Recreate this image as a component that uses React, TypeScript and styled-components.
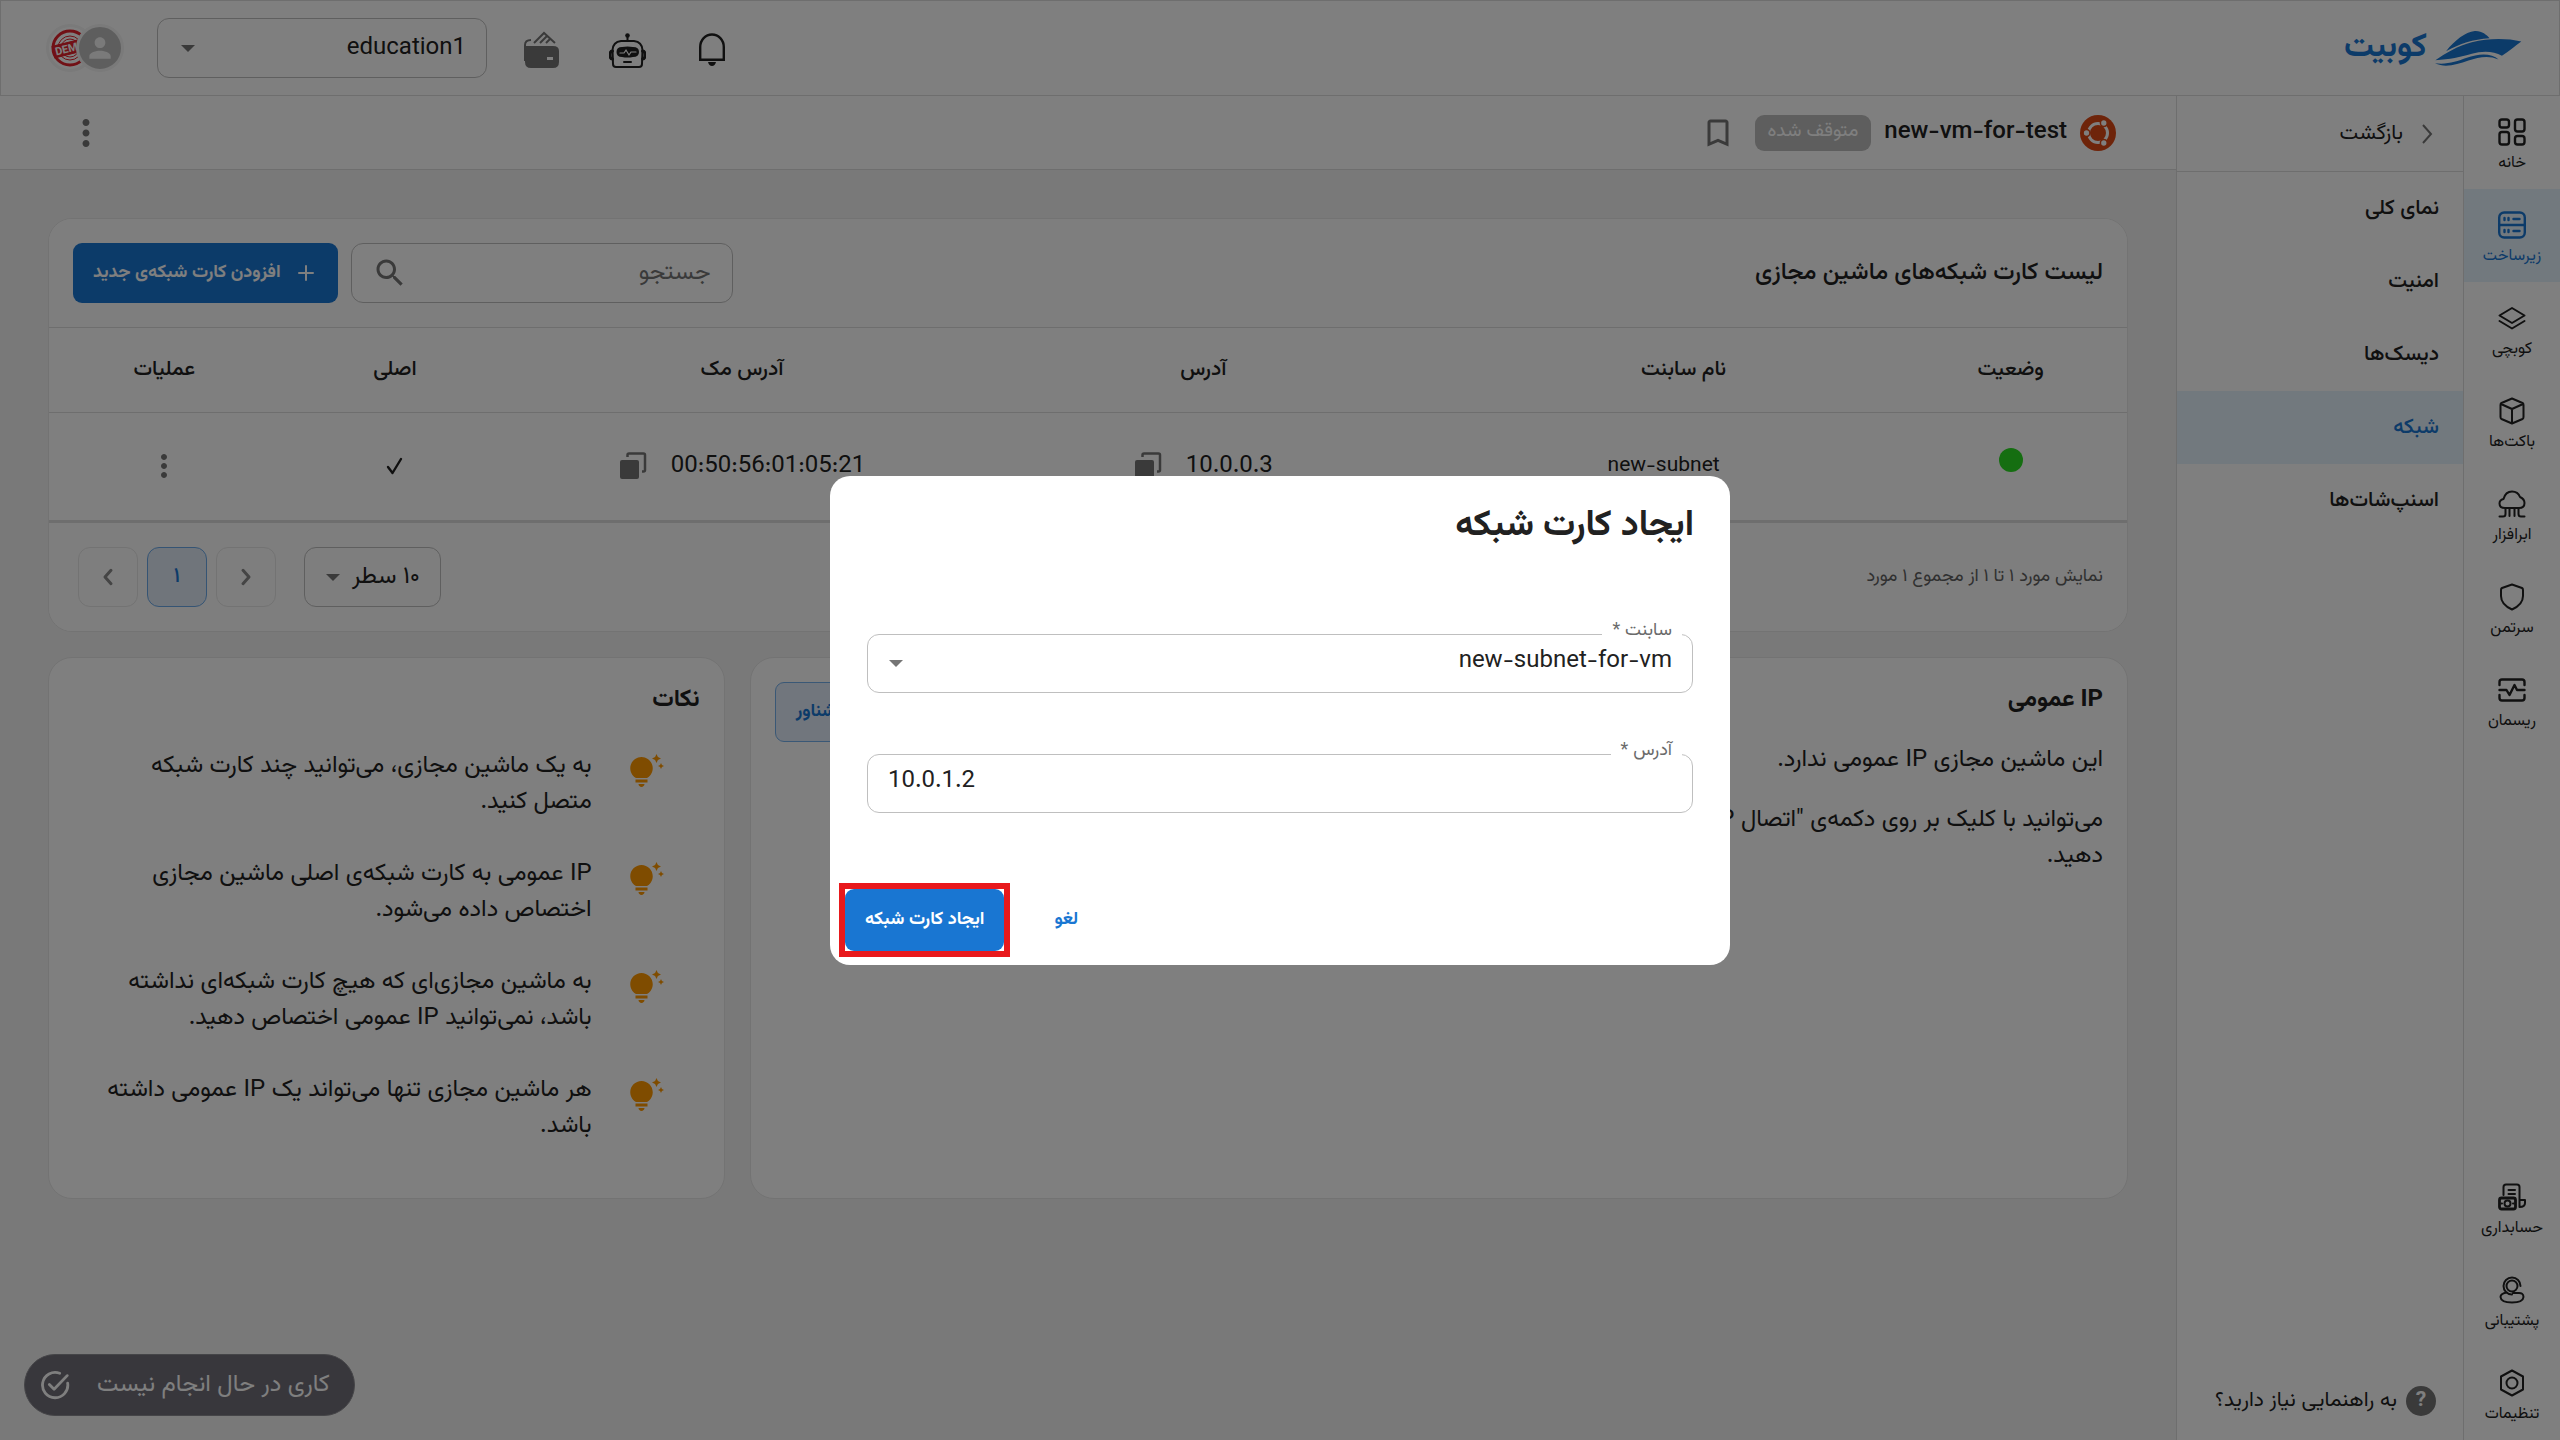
import React from 'react';
import styled, { createGlobalStyle } from 'styled-components';

const c = {
  blue: '#1976d2',
  text: '#212121',
  muted: '#757575',
  line: '#dcdcdc',
  soft: '#e6e6e6',
  active: '#e4f2fd',
  page: '#f3f3f3',
};

const GlobalStyle = createGlobalStyle`
  *, *::before, *::after { box-sizing: border-box; }
  body {
    margin: 0;
    background: ${c.page};
    color: ${c.text};
    font-family: Vazirmatn, Roboto, 'DejaVu Sans', sans-serif;
    font-size: 24px;
    line-height: 36px;
  }
  button, input, select { font: inherit; color: inherit; margin: 0; }
  h1, h2, h3, p, ul { margin: 0; padding: 0; }
  ul { list-style: none; }
  svg { display: block; flex: none; }
`;

/* ---------- shell ---------- */

const Page = styled.div`
  min-height: 100vh;
  display: flex;
  flex-direction: column;
`;
const Header = styled.header`
  height: 96px;
  flex: none;
  display: flex;
  align-items: center;
  justify-content: space-between;
  padding: 0 37px 0 45px;
  background: #fff;
  border: 1px solid ${c.line};
`;
const Brand = styled.a`
  display: flex;
  align-items: center;
  gap: 8px;
  color: ${c.blue};
  font-size: 33px;
  line-height: 48px;
  font-weight: 700;
  text-decoration: none;
`;
const HeaderTools = styled.div`
  display: flex;
  align-items: center;
  gap: 25px;
`;
const IconButton = styled.button<{ $size?: number; $color?: string }>`
  width: ${p => p.$size ?? 60}px;
  height: ${p => p.$size ?? 60}px;
  padding: 0;
  border: 0;
  background: none;
  display: flex;
  align-items: center;
  justify-content: center;
  color: ${p => p.$color ?? c.text};
`;
const Avatars = styled.div`
  display: flex;
  margin-inline-start: 8px;
`;
const Avatar = styled.span<{ $front?: boolean }>`
  width: 48px;
  height: 48px;
  border-radius: 50%;
  border: 3px solid #f4f4f4;
  overflow: hidden;
  background: ${p => (p.$front ? '#bdbdbd' : '#fff')};
  display: flex;
  align-items: center;
  justify-content: center;
  position: relative;
  z-index: ${p => (p.$front ? 1 : 0)};
  & + & { margin-inline-start: -18px; }
`;
const Body = styled.div`
  flex: 1;
  display: flex;
`;
const Rail = styled.nav`
  width: 97px;
  flex: none;
  display: flex;
  flex-direction: column;
  justify-content: space-between;
  background: #fff;
  border-left: 1px solid ${c.line};
`;
const RailItem = styled.a<{ $active?: boolean }>`
  height: 93px;
  display: flex;
  flex-direction: column;
  align-items: center;
  padding-top: 22px;
  gap: 6px;
  font-size: 16px;
  line-height: 24px;
  white-space: nowrap;
  text-decoration: none;
  color: ${p => (p.$active ? c.blue : c.text)};
  background: ${p => (p.$active ? c.active : 'transparent')};
`;
const Side = styled.aside`
  width: 287px;
  flex: none;
  display: flex;
  flex-direction: column;
  background: #fff;
  border-left: 1px solid ${c.line};
  font-size: 21px;
`;
const Back = styled.a`
  height: 76px;
  display: flex;
  align-items: center;
  gap: 12px;
  padding: 0 24px;
  border-bottom: 1px solid ${c.line};
  color: ${c.text};
  text-decoration: none;
`;
const SideLink = styled.a<{ $active?: boolean }>`
  height: 73px;
  display: flex;
  align-items: center;
  padding: 0 24px;
  text-decoration: none;
  font-weight: 500;
  color: ${p => (p.$active ? c.blue : c.text)};
  background: ${p => (p.$active ? c.active : 'transparent')};
`;
const Help = styled.a`
  margin-top: auto;
  display: flex;
  align-items: center;
  gap: 9px;
  padding: 0 27px 21px;
  color: ${c.text};
  text-decoration: none;
`;
const HelpMark = styled.span`
  width: 30px;
  height: 30px;
  border-radius: 50%;
  background: ${c.muted};
  color: #fff;
  display: flex;
  align-items: center;
  justify-content: center;
  font-weight: 700;
`;
const Main = styled.main`
  flex: 1;
  min-width: 0;
`;
const SubHeader = styled.div`
  height: 74px;
  display: flex;
  align-items: center;
  gap: 13px;
  padding: 0 60px 0 65px;
  background: #fff;
  border-bottom: 1px solid ${c.line};
`;
const VmName = styled.h1`
  padding-bottom: 2px;
  font-size: 24px;
  line-height: 36px;
  font-weight: 500;
  direction: ltr;
`;
const Badge = styled.span`
  padding: 0 13px;
  height: 36px;
  border-radius: 9px;
  background: #bdbdbd;
  color: #fff;
  font-size: 19px;
  line-height: 34px;
`;
const Spacer = styled.span`
  flex: 1;
`;
const Content = styled.div`
  padding: 48px 48px 48px 48px;
  display: grid;
  grid-template-columns: repeat(12, 1fr);
  gap: 25px;
`;

/* ---------- cards ---------- */

const Card = styled.section<{ $span: number }>`
  grid-column: span ${p => p.$span};
  background: #fff;
  border: 1px solid ${c.soft};
  border-radius: 24px;
  overflow: hidden;
`;
const Bar = styled.div`
  display: flex;
  align-items: center;
  gap: 13px;
  padding: 24px;
  background: #fcfcfc;
`;
const CardTitle = styled.h2<{ $bold?: boolean }>`
  font-size: 24px;
  line-height: 36px;
  font-weight: ${p => (p.$bold ? 700 : 500)};
`;
const SearchBox = styled.label`
  width: 382px;
  height: 60px;
  display: flex;
  align-items: center;
  padding: 0 21px 0 20px;
  background: #fff;
  border: 1px solid #bfbfbf;
  border-radius: 12px;
  color: ${c.muted};
`;
const SearchInput = styled.input`
  flex: 1;
  min-width: 0;
  border: 0;
  padding: 0;
  background: none;
  outline: none;
  &::placeholder { color: ${c.muted}; opacity: 1; }
`;
const Button = styled.button<{ $kind?: 'outline' | 'text'; $height?: number }>`
  height: ${p => p.$height ?? 60}px;
  display: flex;
  align-items: center;
  justify-content: center;
  gap: 13px;
  padding: 0 20px;
  border-radius: 9px;
  font-size: 18px;
  font-weight: 700;
  white-space: nowrap;
  border: ${p => (p.$kind === 'outline' ? '1px solid #74b0ec' : '0')};
  color: ${p => (p.$kind ? c.blue : '#fff')};
  background: ${p => (p.$kind === 'outline' ? '#e3edfa' : p.$kind === 'text' ? 'none' : c.blue)};
`;
const Table = styled.table`
  width: 100%;
  table-layout: fixed;
  border-collapse: collapse;
  border-top: 1px solid ${c.line};
  border-bottom: 3px solid ${c.line};
  text-align: center;
`;
const Th = styled.th<{ $w?: string; $shift?: boolean }>`
  width: ${p => p.$w ?? 'auto'};
  height: 85px;
  padding: ${p => (p.$shift ? '0 0 0 40px' : 0)};
  font-size: 21px;
  font-weight: 500;
  border-bottom: 1px solid ${c.line};
`;
const Td = styled.td<{ $small?: boolean }>`
  height: 109px;
  padding: 0 0 2px;
  font-size: ${p => (p.$small ? 21 : 24)}px;
`;
const CellRow = styled.div`
  display: flex;
  align-items: center;
  justify-content: center;
  gap: 24px;
  color: ${c.text};
`;
const StatusDot = styled.span`
  display: inline-block;
  width: 24px;
  height: 24px;
  border-radius: 50%;
  background: #2bdc22;
`;
const FootNote = styled.span`
  flex: 1;
  font-size: 18px;
  color: #616161;
`;
const PageButton = styled.button<{ $active?: boolean }>`
  width: 60px;
  height: 60px;
  padding: 0;
  display: flex;
  align-items: center;
  justify-content: center;
  border-radius: 12px;
  font-size: 21px;
  font-weight: 500;
  border: 1px solid ${p => (p.$active ? '#6ba9e8' : c.soft)};
  color: ${p => (p.$active ? c.blue : '#8a8a8a')};
  background: ${p => (p.$active ? '#e0eaf7' : 'none')};
`;
const Pager = styled.div`
  display: flex;
  gap: 9px;
  margin: 0 15px 0 5px;
`;

/* ---------- selects ---------- */

const SelectBox = styled.div<{ $w?: number; $h?: number }>`
  width: ${p => (p.$w ? p.$w + 'px' : '100%')};
  height: ${p => p.$h ?? 60}px;
  display: grid;
  align-items: center;
`;
const Select = styled.select<{ $lift?: number }>`
  grid-area: 1 / 1;
  width: 100%;
  height: 100%;
  appearance: none;
  padding: 0 20px ${p => p.$lift ?? 0}px;
  border: 1px solid #bfbfbf;
  border-radius: 12px;
  background: none;
  outline: none;
`;
const Arrow = styled.span<{ $end: number }>`
  grid-area: 1 / 1;
  justify-self: end;
  margin-inline-end: ${p => p.$end}px;
  border: 7px solid transparent;
  border-top-color: ${c.muted};
  border-bottom: 0;
  pointer-events: none;
`;

/* ---------- info cards ---------- */

const InfoHead = styled.div`
  display: flex;
  justify-content: space-between;
  align-items: flex-start;
  padding: 24px 24px 0;
  height: 84px;
`;
const InfoBody = styled.div`
  padding: 0 24px;
  display: flex;
  flex-direction: column;
  gap: 24px;
`;
const Tips = styled.ul`
  padding: 6px 60px 54px 48px;
  display: flex;
  flex-direction: column;
  gap: 36px;
`;
const Tip = styled.li`
  display: flex;
  gap: 36px;
  svg { margin-top: 6px; }
`;

/* ---------- toast and dialog ---------- */

const Toast = styled.div`
  position: fixed;
  left: 24px;
  bottom: 24px;
  height: 62px;
  display: flex;
  align-items: center;
  gap: 27px;
  padding: 0 24px 0 15px;
  border-radius: 31px;
  background: #706e78;
  border: 1px solid #8b8a90;
  color: #fff;
`;
const Backdrop = styled.div`
  position: fixed;
  inset: 0;
  z-index: 10;
  background: rgba(0, 0, 0, 0.5);
  display: flex;
  align-items: center;
  justify-content: center;
`;
const Dialog = styled.form`
  width: 900px;
  background: #fff;
  border-radius: 20px;
  display: flex;
  flex-direction: column;
`;
const DialogTitle = styled.h2`
  padding: 26px 36px 0;
  font-size: 36px;
  line-height: 48px;
  font-weight: 700;
`;
const Fields = styled.div`
  padding: 84px 37px 70px;
  display: flex;
  flex-direction: column;
  gap: 61px;
`;
const Field = styled.div`
  position: relative;
`;
const FieldLabel = styled.label`
  position: absolute;
  top: -15px;
  right: 11px;
  padding: 0 10px;
  background: #fff;
  color: #6b6b6b;
  font-size: 18px;
  line-height: 24px;
`;
const TextInput = styled.input`
  width: 100%;
  height: 59px;
  display: block;
  padding: 0 20px 4px;
  border: 1px solid #bfbfbf;
  border-radius: 12px;
  outline: none;
  direction: ltr;
`;
const Actions = styled.div`
  display: flex;
  justify-content: flex-end;
  align-items: center;
  gap: 24px;
  padding: 0 9px 8px;
`;
const Highlight = styled.div`
  border: 6px solid #e8191c;
`;

/* ---------- icons ---------- */

const Line = ({ size = 28, w = 2, children, vb = '0 0 28 28' }: { size?: number; w?: number; vb?: string; children: React.ReactNode }) => (
  <svg width={size} height={size} viewBox={vb} fill="none" stroke="currentColor" strokeWidth={w} strokeLinecap="round" strokeLinejoin="round">{children}</svg>
);
const Solid = ({ d, size = 36, fill = 'currentColor' }: { d: string; size?: number; fill?: string }) => (
  <svg width={size} height={size} viewBox="0 0 24 24" fill={fill}><path d={d} /></svg>
);
const DOTS = 'M12 8c1.1 0 2-.9 2-2s-.9-2-2-2-2 .9-2 2 .9 2 2 2zm0 2c-1.1 0-2 .9-2 2s.9 2 2 2 2-.9 2-2-.9-2-2-2zm0 6c-1.1 0-2 .9-2 2s.9 2 2 2 2-.9 2-2-.9-2-2-2z';
const SEARCH = 'M15.5 14h-.79l-.28-.27C15.41 12.59 16 11.11 16 9.5 16 5.91 13.09 3 9.5 3S3 5.91 3 9.5 5.91 16 9.5 16c1.61 0 3.09-.59 4.23-1.57l.27.28v.79l5 4.99L20.49 19l-4.99-5zm-6 0C7.01 14 5 11.99 5 9.5S7.01 5 9.5 5 14 7.01 14 9.5 11.99 14 9.5 14z';
const BOOKMARK = 'M17 3H7c-1.1 0-1.99.9-1.99 2L5 21l7-3 7 3V5c0-1.1-.9-2-2-2zm0 15l-5-2.18L7 18V5h10v13z';
const BULB = 'M7 20h4c0 1.1-.9 2-2 2s-2-.9-2-2zm-2-1h8v-2H5v2zm11.5-9.5c0 3.82-2.66 5.86-3.77 6.5H5.27c-1.11-.64-3.77-2.68-3.77-6.5C1.5 5.36 4.86 2 9 2s7.5 3.36 7.5 7.5zm4.87-2.13L20 8l1.37.63L22 10l.63-1.37L24 8l-1.37-.63L22 6l-.63 1.37zM19 6l.94-2.06L22 3l-2.06-.94L19 0l-.94 2.06L16 3l2.06.94L19 6z';
const PERSON = 'M12 12c2.21 0 4-1.79 4-4s-1.79-4-4-4-4 1.79-4 4 1.79 4 4 4zm0 2c-2.67 0-8 1.34-8 4v2h16v-2c0-2.66-5.33-4-8-4z';

const Logo = () => (
  <svg width="87" height="37" viewBox="315 62 260 110" fill="currentColor">
    <path d="M348 125C375 92 405 68 434 65C456 64 468 76 478 86C428 89 390 102 348 125Z" />
    <path d="M316 152C345 131 385 108 425 98C475 86 530 86 573 96C556 108 536 126 515 139C490 124 455 124 425 133C390 143 360 150 316 152Z" />
    <path d="M315 161C350 166 380 156 410 145C445 131 485 130 505 150C475 136 445 143 415 153C380 165 345 176 315 161Z" />
  </svg>
);
const Stamp = () => (
  <svg width="42" height="42" viewBox="0 0 42 42" fill="none" stroke="#e3222c">
    <circle cx="21" cy="21" r="17" strokeWidth="3" />
    <circle cx="21" cy="21" r="12" strokeWidth="1" />
    <circle cx="21" cy="21" r="9" strokeWidth="1" />
    <g transform="rotate(-14 21 21)">
      <rect x="4" y="15" width="34" height="12" fill="#e3222c" />
      <text x="21" y="25" fill="#fff" stroke="none" fontSize="11" fontWeight="700" textAnchor="middle" direction="ltr" fontFamily="Roboto, sans-serif">DEMO</text>
    </g>
  </svg>
);
const Ubuntu = () => (
  <svg width="36" height="36" viewBox="0 0 36 36">
    <circle cx="18" cy="18" r="18" fill="#dd4814" />
    <circle cx="18" cy="18" r="9.5" fill="none" stroke="#fff" strokeWidth="3" />
    <g stroke="#dd4814" strokeWidth="1.5" fill="#fff">
      <circle cx="6.5" cy="18" r="3.4" />
      <circle cx="23.8" cy="8" r="3.4" />
      <circle cx="23.8" cy="28" r="3.4" />
    </g>
  </svg>
);
const Wallet = () => (
  <svg width="36" height="39" viewBox="0 -2 36 39" fill="none" stroke="currentColor">
    <path d="M1 30V14Q1 9 7 9" strokeWidth="2" />
    <path d="M10 12L20 2L31 12M16 12L23 5M22 12L26 8" strokeWidth="2" />
    <path fillRule="evenodd" d="M1 15H29Q35 15 35 20V31Q35 37 29 37H7Q1 37 1 31ZM23 26V29H29V26Z" fill="currentColor" stroke="none" />
  </svg>
);
const Robot = () => (
  <svg width="37" height="39" viewBox="0 -4 37 39" fill="none" stroke="currentColor" strokeWidth="2" strokeLinecap="round">
    <circle cx="18.5" cy="2.5" r="2.3" fill="currentColor" stroke="none" />
    <path d="M18.5 3V8" />
    <path d="M12 8H25Q33 9 33.5 17L33 31Q33 34 30 34H7Q4 34 4 31L3.500 17Q4 9 12 8Z" />
    <path d="M3.500 18Q1 18 1 22Q1 26 3.500 26M33.500 18Q36 18 36 22Q36 26 33.500 26" strokeWidth="3" />
    <path d="M13 14Q18.500 13 24 14Q30 14 30 19Q30 24 24 24Q18.500 25 13 24Q7.500 24 7.500 19Q7.500 14 13 14Z" fill="currentColor" stroke="none" />
    <path d="M15 29H22" />
    <path d="M11 20H15L17 17L20 22L22 19H27" stroke="#fff" strokeWidth="1.2" />
  </svg>
);
const Bell = () => (
  <svg width="28" height="37" viewBox="0 -3 28 37" fill="none" stroke="currentColor" strokeWidth="2.4">
    <path d="M2.200 26.800V14A11.800 12.500 0 0 1 25.800 14V26.800Z" />
    <path d="M10 29H18Q17 33 14 33Q11 33 10 29Z" fill="currentColor" stroke="none" />
  </svg>
);
const Copy = () => (
  <svg width="28" height="28" viewBox="0 0 28 28" fill="none" stroke={c.muted} strokeWidth="2.5">
    <path d="M8.500 5V3Q8.500 1.500 10 1.500H24.500Q26 1.500 26 3V18Q26 19.500 24.500 19.500H23" />
    <rect x="1" y="8" width="19" height="19" rx="2" fill={c.muted} stroke="none" />
  </svg>
);
const Chevron = ({ left, size = 36 }: { left?: boolean; size?: number }) => (
  <Line size={size} vb="0 0 24 24"><path d={left ? 'M14 7.500L10 12L14 16.500' : 'M10 7.500L14 12L10 16.500'} /></Line>
);

const icons: Record<string, React.ReactNode> = {
  home: <Line w={2.4}><rect x="1.5" y="1.5" width="9.5" height="8" rx="2.5" /><rect x="1.5" y="14" width="9.5" height="12.5" rx="2.5" /><rect x="17" y="1.5" width="9.5" height="12" rx="2.5" /><rect x="17" y="18" width="9.5" height="8.5" rx="2.5" /></Line>,
  infra: <Line w={2.4}><rect x="1.2" y="1.5" width="25.6" height="25" rx="5" /><path d="M1 14H27M6.500 7V9M10.500 7V9M15.500 8H21.500M6.500 19V21M10.500 19V21M15.500 20H21.500" /></Line>,
  kubchi: <Line><path d="M14 4L26.500 11.500L14 19L1.500 11.500ZM1.500 17L14 24.500L26.500 17" /></Line>,
  bucket: <Line><path d="M14 1.500L24.500 6Q25.500 6.500 25.500 8V20Q25.500 21.500 24.500 22L14 26.500L3.500 22Q2.500 21.500 2.500 20V8Q2.500 6.500 3.500 6ZM3 7L14 12L25 7M14 12V26" /></Line>,
  cloud: <Line><path d="M7 18Q1.500 18 1.500 13.500Q1.500 10 5.500 9Q7.500 1.500 14 1.500Q20 1.500 22 7Q26.500 9 26.500 13Q26.500 18 21 18ZM11.500 18V26M16.500 18V26M7.500 18V24Q7.500 26.500 5 26.500H1.500M20.500 18V24Q20.500 26.500 23 26.500H26.500" /></Line>,
  shield: <Line><path d="M14 1.500L24 5Q25 5.500 25 7V13Q25 21.500 14 26.500Q3 21.500 3 13V7Q3 5.500 4 5Z" /></Line>,
  rope: <Line w={2.4}><path d="M1.500 9V6Q1.500 3.500 4 3.500H24Q26.500 3.500 26.500 6V9M1.500 19V22Q1.500 24.500 4 24.500H24Q26.500 24.500 26.500 22V19M1.500 14H8.500L11.500 19L16.500 9L19 14H26.500" /></Line>,
  account: <Line><path d="M5.500 12V4Q5.500 1.500 8 1.500H19Q21.500 1.500 21.500 4V24M10.500 7H17M10.500 11H17M21.500 17H27V20Q27 24 21.500 24" /><rect x="1.5" y="15" width="16" height="11" rx="2" strokeWidth="2.8" /><circle cx="9.5" cy="20.5" r="3" /><path d="M3.500 20.500H4M15 20.500H15.500" /></Line>,
  support: <Line><circle cx="14" cy="10" r="5.5" /><path d="M22.500 10A8.500 8.500 0 1 0 14 18.500M9 16.500Q2.500 17.500 2.500 21Q3 26.500 14 26.500Q25 26.500 25.500 21Q25.500 16.500 20 17H15" /></Line>,
  settings: <Line><path d="M14 1.500L25 7.500V20.500L14 26.500L3 20.500V7.500Z" /><circle cx="14" cy="14" r="5.5" /></Line>,
};

/* ---------- data ---------- */

const railTop = [
  ['home', 'خانه'], ['infra', 'زیرساخت'], ['kubchi', 'کوبچی'], ['bucket', 'باکت‌ها'],
  ['cloud', 'ابرافزار'], ['shield', 'سرتمن'], ['rope', 'ریسمان'],
];
const railBottom = [['account', 'حسابداری'], ['support', 'پشتیبانی'], ['settings', 'تنظیمات']];
const sideLinks = ['نمای کلی', 'امنیت', 'دیسک‌ها', 'شبکه', 'اسنپ‌شات‌ها'];
const tips = [
  ['به یک ماشین مجازی، می‌توانید چند کارت شبکه', 'متصل کنید.'],
  ['IP عمومی به کارت شبکه‌ی اصلی ماشین مجازی', 'اختصاص داده می‌شود.'],
  ['به ماشین مجازی‌ای که هیچ کارت شبکه‌ای نداشته', 'باشد، نمی‌توانید IP عمومی اختصاص دهید.'],
  ['هر ماشین مجازی تنها می‌تواند یک IP عمومی داشته', 'باشد.'],
];

const RailGroup = ({ items }: { items: string[][] }) => (
  <div>
    {items.map(([id, label]) => (
      <RailItem key={id} href="#" $active={id === 'infra'}>{icons[id]}{label}</RailItem>
    ))}
  </div>
);

export default function App() {
  return (
    <Page dir="rtl" lang="fa">
      <GlobalStyle />
      <Header>
        <Brand href="#"><Logo />کوبیت</Brand>
        <HeaderTools>
          <IconButton aria-label="اعلان‌ها"><Bell /></IconButton>
          <IconButton aria-label="دستیار"><Robot /></IconButton>
          <IconButton aria-label="کیف پول" $color={c.muted}><Wallet /></IconButton>
          <SelectBox $w={330}>
            <Select aria-label="پروژه" defaultValue="education1"><option>education1</option></Select>
            <Arrow $end={24} />
          </SelectBox>
          <Avatars>
            <Avatar $front><Solid d={PERSON} size={32} fill="#f4f4f4" /></Avatar>
            <Avatar><Stamp /></Avatar>
          </Avatars>
        </HeaderTools>
      </Header>
      <Body>
        <Rail>
          <RailGroup items={railTop} />
          <RailGroup items={railBottom} />
        </Rail>
        <Side>
          <Back href="#"><svg width="24" height="24" viewBox="0 0 24 24" fill="none" stroke={c.muted} strokeWidth="2"><path d="M8 3L16 12L8 21" /></svg>بازگشت</Back>
          {sideLinks.map(t => <SideLink key={t} href="#" $active={t === 'شبکه'}>{t}</SideLink>)}
          <Help href="#"><HelpMark>?</HelpMark>به راهنمایی نیاز دارید؟</Help>
        </Side>
        <Main>
          <SubHeader>
            <Ubuntu />
            <VmName>new-vm-for-test</VmName>
            <Badge>متوقف شده</Badge>
            <IconButton aria-label="نشان کردن" $size={48} $color={c.muted}><Solid d={BOOKMARK} /></IconButton>
            <Spacer />
            <IconButton aria-label="گزینه‌ها" $size={42} $color={c.muted}><Solid d={DOTS} size={42} /></IconButton>
          </SubHeader>
          <Content>
            <Card $span={12}>
              <Bar>
                <CardTitle>لیست کارت شبکه‌های ماشین مجازی</CardTitle>
                <Spacer />
                <SearchBox>
                  <SearchInput placeholder="جستجو" aria-label="جستجو" />
                  <Solid d={SEARCH} />
                </SearchBox>
                <Button>
                  <Line size={24} w={2} vb="0 0 24 24"><path d="M12 5V19M5 12H19" /></Line>
                  افزودن کارت شبکه‌ی جدید
                </Button>
              </Bar>
              <Table>
                <thead>
                  <tr>
                    <Th $w="11.2%">وضعیت</Th>
                    <Th $shift>نام سابنت</Th>
                    <Th $w="22.1%">آدرس</Th>
                    <Th $w="22.3%">آدرس مک</Th>
                    <Th $w="11.1%">اصلی</Th>
                    <Th $w="11.1%">عملیات</Th>
                  </tr>
                </thead>
                <tbody>
                  <tr>
                    <Td><StatusDot /></Td>
                    <Td $small>new-subnet</Td>
                    <Td><CellRow>10.0.0.3<Copy /></CellRow></Td>
                    <Td><CellRow>00:50:56:01:05:21<Copy /></CellRow></Td>
                    <Td><CellRow><Line size={20} w={2.4} vb="0 0 20 20"><path d="M3 11L7.500 17L16 3" /></Line></CellRow></Td>
                    <Td><CellRow><IconButton aria-label="عملیات" $size={36} $color={c.muted}><Solid d={DOTS} /></IconButton></CellRow></Td>
                  </tr>
                </tbody>
              </Table>
              <Bar>
                <FootNote>نمایش مورد ۱ تا ۱ از مجموع ۱ مورد</FootNote>
                <SelectBox $w={137}>
                  <Select aria-label="تعداد سطر" defaultValue="10"><option value="10">۱۰ سطر</option></Select>
                  <Arrow $end={22} />
                </SelectBox>
                <Pager>
                  <PageButton aria-label="صفحه قبل"><Chevron /></PageButton>
                  <PageButton $active>۱</PageButton>
                  <PageButton aria-label="صفحه بعد"><Chevron left /></PageButton>
                </Pager>
              </Bar>
            </Card>
            <Card $span={8}>
              <InfoHead>
                <CardTitle $bold>IP عمومی</CardTitle>
                <Button $kind="outline">اتصال IP شناور</Button>
              </InfoHead>
              <InfoBody>
                <p>این ماشین مجازی IP عمومی ندارد.</p>
                <p>می‌توانید با کلیک بر روی دکمه‌ی "اتصال IP شناور"، یک IP عمومی از لیست IPهای شناور خود را به این ماشین مجازی اختصاص<br />دهید.</p>
              </InfoBody>
            </Card>
            <Card $span={4}>
              <InfoHead><CardTitle $bold>نکات</CardTitle></InfoHead>
              <Tips>
                {tips.map(([a, b]) => (
                  <Tip key={a}><Solid d={BULB} fill="#ff9800" /><p>{a}<br />{b}</p></Tip>
                ))}
              </Tips>
            </Card>
          </Content>
        </Main>
      </Body>
      <Toast role="status">
        کاری در حال انجام نیست
        <Line size={30} w={3} vb="0 0 32 32"><path d="M21 3.500A13.500 13.500 0 1 0 29.500 14M10 15.500L15 20.500L29 6" /></Line>
      </Toast>
      <Backdrop>
        <Dialog role="dialog" aria-labelledby="dialog-title" onSubmit={e => e.preventDefault()}>
          <DialogTitle id="dialog-title">ایجاد کارت شبکه</DialogTitle>
          <Fields>
            <Field>
              <SelectBox $h={59}>
                <Select id="subnet" $lift={4} defaultValue="new-subnet-for-vm"><option>new-subnet-for-vm</option></Select>
                <Arrow $end={22} />
              </SelectBox>
              <FieldLabel htmlFor="subnet">سابنت *</FieldLabel>
            </Field>
            <Field>
              <TextInput id="address" defaultValue="10.0.1.2" />
              <FieldLabel htmlFor="address">آدرس *</FieldLabel>
            </Field>
          </Fields>
          <Actions>
            <Button type="button" $kind="text" $height={62}>لغو</Button>
            <Highlight><Button $height={62}>ایجاد کارت شبکه</Button></Highlight>
          </Actions>
        </Dialog>
      </Backdrop>
    </Page>
  );
}
